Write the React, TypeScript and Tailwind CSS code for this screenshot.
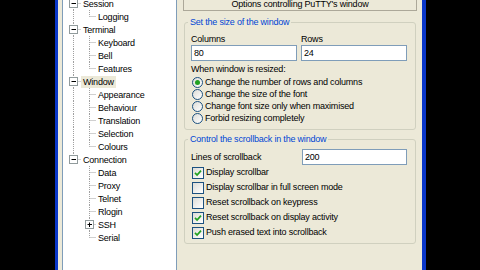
import React from "react";

type TreeRow = {
  label: string;
  level: 1 | 2;
  expander?: "minus" | "plus";
  rootLine: "full" | "top" | "bottom" | "none";
  childLine?: "full" | "top";
  selected?: boolean;
};

const rows: TreeRow[] = [
  { label: "Session", level: 1, expander: "minus", rootLine: "full" },
  { label: "Logging", level: 2, rootLine: "full", childLine: "top" },
  { label: "Terminal", level: 1, expander: "minus", rootLine: "full" },
  { label: "Keyboard", level: 2, rootLine: "full", childLine: "full" },
  { label: "Bell", level: 2, rootLine: "full", childLine: "full" },
  { label: "Features", level: 2, rootLine: "full", childLine: "top" },
  { label: "Window", level: 1, expander: "minus", rootLine: "full", selected: true },
  { label: "Appearance", level: 2, rootLine: "full", childLine: "full" },
  { label: "Behaviour", level: 2, rootLine: "full", childLine: "full" },
  { label: "Translation", level: 2, rootLine: "full", childLine: "full" },
  { label: "Selection", level: 2, rootLine: "full", childLine: "full" },
  { label: "Colours", level: 2, rootLine: "full", childLine: "top" },
  { label: "Connection", level: 1, expander: "minus", rootLine: "top" },
  { label: "Data", level: 2, rootLine: "none", childLine: "full" },
  { label: "Proxy", level: 2, rootLine: "none", childLine: "full" },
  { label: "Telnet", level: 2, rootLine: "none", childLine: "full" },
  { label: "Rlogin", level: 2, rootLine: "none", childLine: "full" },
  { label: "SSH", level: 2, expander: "plus", rootLine: "none", childLine: "full" },
  { label: "Serial", level: 2, rootLine: "none", childLine: "top" },
];

const dot = { stroke: "#A0A0A0", strokeWidth: 1, strokeDasharray: "1 1" };

function Expander({ cx, kind }: { cx: number; kind: "minus" | "plus" }) {
  return (
    <g>
      <rect x={cx - 4} y={2.5} width={8} height={8} fill="#fff" stroke="#919B9C" />
      <line x1={cx - 2} y1={6.5} x2={cx + 2.5} y2={6.5} stroke="#000" />
      {kind === "plus" && <line x1={cx} y1={4.5} x2={cx} y2={9} stroke="#000" />}
    </g>
  );
}

function Connectors({ row }: { row: TreeRow }) {
  const w = row.level === 1 ? 18 : 33;
  const rx = 10.5;
  const cx = 26.5;
  return (
    <svg width={w} height={13} className="shrink-0">
      {row.rootLine === "full" && <line x1={rx} y1={0} x2={rx} y2={13} {...dot} />}
      {row.rootLine === "top" && <line x1={rx} y1={0} x2={rx} y2={6.5} {...dot} />}
      {row.level === 1 && <line x1={rx + 4} y1={6.5} x2={18} y2={6.5} {...dot} />}
      {row.level === 1 && row.expander && <Expander cx={rx} kind={row.expander} />}
      {row.level === 2 && (
        <>
          <line x1={cx} y1={0} x2={cx} y2={row.childLine === "top" ? 6.5 : 13} {...dot} />
          <line x1={cx} y1={6.5} x2={33} y2={6.5} {...dot} />
          {row.expander && <Expander cx={cx} kind={row.expander} />}
        </>
      )}
    </svg>
  );
}

function Radio({ checked, label }: { checked?: boolean; label: string }) {
  return (
    <div className="flex items-center h-[12px] gap-[2px]">
      <span className="ml-[1px] w-[11px] h-[11px] rounded-full border border-[#1C5180] bg-gradient-to-br from-[#DCDCD7] to-[#FFFFFF] flex items-center justify-center">
        {checked && <span className="w-[5px] h-[5px] rounded-full bg-[#21A121]" />}
      </span>
      <span>{label}</span>
    </div>
  );
}

function Check({ checked, label }: { checked?: boolean; label: string }) {
  return (
    <div className="flex items-center h-[15px] gap-[2px]">
      <span className="ml-[1px] w-[12px] h-[12px] border border-[#1C5180] bg-gradient-to-br from-[#DCDCD7] to-[#FFFFFF] flex items-center justify-center">
        {checked && (
          <svg width="10" height="10" viewBox="0 0 10 10">
            <path d="M2 4.8 L4.1 7 L8 2.6" fill="none" stroke="#21A121" strokeWidth="1.7" />
          </svg>
        )}
      </span>
      <span>{label}</span>
    </div>
  );
}

export default function App() {
  return (
    <div className="w-[480px] h-[270px] bg-black flex overflow-hidden font-['Liberation_Sans','Arial',sans-serif] text-[9px] tracking-[-0.2px] leading-[11px] text-black">
      <div className="w-[55px] shrink-0" />
      <div className="flex shrink-0 h-full bg-[#ECE9D8] border-l-[3px] border-r-[4px] border-[#0A37C8] pl-[4px] pr-[5px] gap-[6px]">
        <div className="w-[115px] h-full bg-white border-x border-[#7F9DB9]">
          <div className="-mt-[3px]">
            {rows.map((r) => (
              <div key={r.label} className="flex items-center h-[13px]">
                <Connectors row={r} />
                <span className={`px-[2px] leading-[12px] ${r.selected ? "bg-[#ECE9D8]" : ""}`}>{r.label}</span>
              </div>
            ))}
          </div>
        </div>

        <div className="w-[234px] flex flex-col">
          <div className="-mt-[2px] h-[13px] border border-[#ACA899] flex items-center justify-center">
            Options controlling PuTTY's window
          </div>

          <fieldset className="mt-[6px] mx-[1px] border border-[#D0D0BF] rounded-[3px]">
            <legend className="ml-[3px] px-[2px] text-[#0046D5] leading-[11px]">Set the size of the window</legend>
            <div className="pl-[6px] pr-[7px] pt-[6px] pb-[5px]">
              <div className="grid grid-cols-[106px_106px] gap-x-[4px]">
                <span>Columns</span>
                <span>Rows</span>
                <div className="h-[16px] border border-[#7F9DB9] bg-white pl-[2px] flex items-center">80</div>
                <div className="h-[16px] border border-[#7F9DB9] bg-white pl-[2px] flex items-center">24</div>
              </div>
              <div className="mt-[3px]">When window is resized:</div>
              <div className="mt-[1px]">
                <Radio checked label="Change the number of rows and columns" />
                <Radio label="Change the size of the font" />
                <Radio label="Change font size only when maximised" />
                <Radio label="Forbid resizing completely" />
              </div>
            </div>
          </fieldset>

          <fieldset className="mt-[4px] mx-[1px] border border-[#D0D0BF] rounded-[3px]">
            <legend className="ml-[3px] px-[2px] text-[#0046D5] leading-[11px]">Control the scrollback in the window</legend>
            <div className="pl-[6px] pr-[7px] pt-[4px] pb-[3px]">
              <div className="grid grid-cols-[107px_105px] gap-x-[4px] items-center">
                <span>Lines of scrollback</span>
                <div className="h-[16px] border border-[#7F9DB9] bg-white pl-[2px] flex items-center">200</div>
              </div>
              <Check checked label="Display scrollbar" />
              <Check label="Display scrollbar in full screen mode" />
              <Check label="Reset scrollback on keypress" />
              <Check checked label="Reset scrollback on display activity" />
              <Check checked label="Push erased text into scrollback" />
            </div>
          </fieldset>
        </div>
      </div>
      <div className="flex-1" />
    </div>
  );
}
